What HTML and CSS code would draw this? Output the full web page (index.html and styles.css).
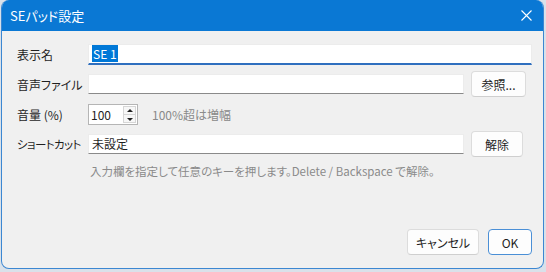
FILE: index.html
```html
<!DOCTYPE html>
<html lang="ja">
<head>
  <meta charset="UTF-8">
  <title>SEパッド設定</title>
  <link rel="stylesheet" href="styles.css">
</head>
<body>
  <div class="dlg">
    <div class="dlg-title">
      <span class="dlg-caption">SEパッド設定</span>
      <svg class="dlg-close" width="11" height="11" viewBox="0 0 11 11">
        <path d="M0.5 0.5 L10.5 10.5 M10.5 0.5 L0.5 10.5" stroke="#fff" stroke-width="1.1" fill="none"/>
      </svg>
    </div>
    <div class="dlg-body">
      <div class="form">
        <label class="lbl">表示名</label>
        <div class="field field-focus wide"><span class="sel">SE 1</span></div>

        <label class="lbl">音声ファイル</label>
        <div class="field"></div>
        <button class="btn btn-side btn-browse">参照...</button>

        <label class="lbl">音量 (%)</label>
        <div class="vol wide">
          <div class="spin">
            <span class="spin-val">100</span>
            <span class="spin-btns">
              <span class="spin-up"></span>
              <span class="spin-down"></span>
            </span>
          </div>
          <span class="note">100%超は増幅</span>
        </div>

        <label class="lbl lbl-narrow">ショートカット</label>
        <div class="field">未設定</div>
        <button class="btn btn-side btn-clear">解除</button>

        <div class="hint wide">入力欄を指定して任意のキーを押します。Delete / Backspace で解除。</div>
      </div>
      <div class="actions">
        <button class="btn btn-cancel">キャンセル</button>
        <button class="btn btn-ok">OK</button>
      </div>
    </div>
  </div>
</body>
</html>
```

FILE: styles.css
```css
html, body {
  margin: 0;
  padding: 0;
}
body {
  width: 546px; height: 272px;
  background-color: #d9e1ea;
  font-family: "Noto Sans CJK JP", "Noto Sans", sans-serif;
  font-size: 12px;
  font-feature-settings: "palt";
  color: #1f1f1f;
  overflow: hidden;
}
.dlg {
  margin-left: 1px;
  width: 541px; height: 268px;
  border: 1px solid #3c87d2;
  border-top: 0;
  border-radius: 8px;
  background-color: #f0f0f0;
  display: flex;
  flex-direction: column;
  overflow: hidden;
}
.dlg-title {
  height: 31px;
  background-color: #0a78d4;
  color: #fff;
  display: flex;
  align-items: center;
  padding: 0 10px 0 8px;
  flex-shrink: 0;
}
.dlg-caption {
  font-size: 13px;
  flex: 1;
}
.dlg-close {
  margin-right: 1px;
}
.dlg-body {
  flex: 1;
  display: flex;
  flex-direction: column;
  padding: 10px 11px 13px 15px;
}
.form {
  display: grid;
  grid-template-columns: 71px 376px 7px 61px;
  grid-template-rows: 26px 26px 26px 26px 18px;
  row-gap: 4px;
  align-items: center;
}
.lbl {
  grid-column: 1;
  font-size: 12px;
  white-space: nowrap;
  color: #1f1f1f;
}
.lbl-narrow {
  font-size: 11.5px;
  letter-spacing: -0.6px;
}
.field {
  grid-column: 2;
  height: 20px;
  box-sizing: border-box;
  background-color: #fff;
  border: 1px solid #ececec;
  border-bottom: 1px solid #8a8a8a;
  line-height: 18px;
  padding: 0 3px;
  font-size: 12px;
}
.wide {
  grid-column: 2 / 5;
}
.field-focus {
  height: 21px;
  border-bottom: 2px solid #2f6fbf;
}
.sel {
  background-color: #0078d7;
  color: #fff;
  padding: 0 1px;
}
.btn {
  font-family: inherit;
  font-size: 12px;
  font-feature-settings: "palt";
  color: #1f1f1f;
  background-color: #fdfdfd;
  border: 1px solid #dcdcdc;
  border-bottom-color: #cfcfcf;
  border-radius: 4px;
  height: 26px;
  padding: 0;
}
.btn-side {
  grid-column: 4;
  justify-self: start;
}
.btn-browse { width: 55px; }
.btn-clear { width: 52px; }
.vol {
  display: flex;
  align-items: center;
}
.spin {
  width: 50px; height: 21px;
  box-sizing: border-box;
  background-color: #fff;
  border: 1px solid #b5b5b5;
  display: flex;
  align-items: center;
}
.spin-val {
  flex: 1;
  padding-left: 2px;
  font-size: 12px;
}
.spin-btns {
  width: 13px; height: 17px;
  margin-right: 1px;
  display: flex;
  flex-direction: column;
  border: 1px solid #d6d6d6;
  box-sizing: border-box;
  background: #f7f7f7;
}
.spin-up, .spin-down {
  flex: 1;
  position: relative;
}
.spin-up { border-bottom: 1px solid #d6d6d6; }
.spin-up::after, .spin-down::after {
  content: '';
  position: absolute;
  left: 3px; top: 2px;
  border-left: 3px solid transparent;
  border-right: 3px solid transparent;
}
.spin-up::after { border-bottom: 3px solid #222; }
.spin-down::after { border-top: 3px solid #222; top: 3px; }
.note {
  margin-left: 14px;
  color: #8a8a8a;
}
.hint {
  color: #8a8a8a;
  padding-left: 2px;
  font-size: 11.5px;
  margin-top: 2px;
}
.actions {
  margin-top: auto;
  display: flex;
  justify-content: flex-end;
  gap: 9px;
}
.btn-cancel { width: 72px; }
.btn-ok {
  width: 44px;
  border: 1px solid #4a8fd6;
}
```
